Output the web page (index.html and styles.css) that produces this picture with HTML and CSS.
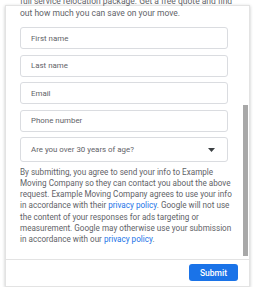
FILE: index.html
```html
<!DOCTYPE html>
<html lang="en">
<head>
    <meta charset="UTF-8">
    <meta name="viewport" content="width=device-width, initial-scale=1.0">
    <title>Moving quote</title>
    <link rel="stylesheet" href="styles.css">
</head>
<body>

<div class="card">
    <div class="card-body">
        <div class="content">
            <p class="intro">full service relocation package. Get a free quote and find<br>out how much you can save on your move.</p>

            <!-- Lead form fields -->
            <input class="field" type="text" placeholder="First name">
            <input class="field" type="text" placeholder="Last name">
            <input class="field" type="email" placeholder="Email">
            <input class="field" type="tel" placeholder="Phone number">
            <div class="field select">
                <span>Are you over 30 years of age?</span>
                <svg class="arrow" width="7" height="4" viewBox="0 0 7 4"><path d="M0 0h7L3.5 4z" fill="#3c4043"/></svg>
            </div>

            <p class="legal">By submitting, you agree to send your info to Example<br>Moving Company so they can contact you about the above<br>request. Example Moving Company agrees to use your info<br>in accordance with their <a href="#">privacy policy</a>. Google will not use<br>the content of your responses for ads targeting or<br>measurement. Google may otherwise use your submission<br>in accordance with our <a href="#">privacy policy</a>.</p>
        </div>
        <div class="scrollbar"><div class="thumb"></div></div>
    </div>
    <div class="card-footer">
        <button class="submit" type="button">Submit</button>
    </div>
</div>

</body>
</html>
```

FILE: styles.css
```css
* {
    margin: 0;
    padding: 0;
    box-sizing: border-box;
}

body {
    font-family: Roboto, "Liberation Sans", sans-serif;
    background-color: #fff;
    color: #5f6368;
}

.card {
    margin: 5px 0 0 5px;
    width: 245px;
    background-color: #fff;
    border: 1px solid #e3e3e3;
    box-shadow: 0 1px 3px rgba(60, 64, 67, 0.3);
}

.card-body {
    display: flex;
    height: 253px;
}

.content {
    flex: 1;
    padding-left: 14px;
}

.intro {
    margin-top: -11px;
    font-size: 8.5px;
    line-height: 12px;
    color: #5f6368;
}

.field {
    display: flex;
    align-items: center;
    width: 208px;
    height: 22px;
    margin-top: 5.5px;
    padding-left: 10px;
    border: 1px solid #dadce0;
    border-radius: 3px;
    font-family: inherit;
    font-size: 7.9px;
    color: #5f6368;
    outline: none;
}

.field::placeholder {
    color: #5f6368;
}

.intro + .field {
    margin-top: 8px;
}

/* Age question drop-down */
.select {
    justify-content: space-between;
    height: 25px;
    padding-right: 12px;
}

.legal {
    margin-top: 4.5px;
    font-size: 8.15px;
    line-height: 11.33px;
    color: #5f6368;
}

.legal a {
    color: #1a73e8;
    text-decoration: none;
}

/* Fake scrollbar, scrolled to the bottom */
.scrollbar {
    width: 7px;
    padding: 0 1px;
}

.thumb {
    margin-top: 99px;
    height: 151px;
    background-color: #a8a8a8;
}

.card-footer {
    display: flex;
    justify-content: flex-end;
    padding: 4px 11px 5px;
    border-top: 1px solid #e3e3e3;
}

.submit {
    width: 49px;
    height: 17px;
    border: none;
    border-radius: 3px;
    background-color: #1a73e8;
    color: #fff;
    font-family: inherit;
    font-size: 8.5px;
    font-weight: 500;
}
```
